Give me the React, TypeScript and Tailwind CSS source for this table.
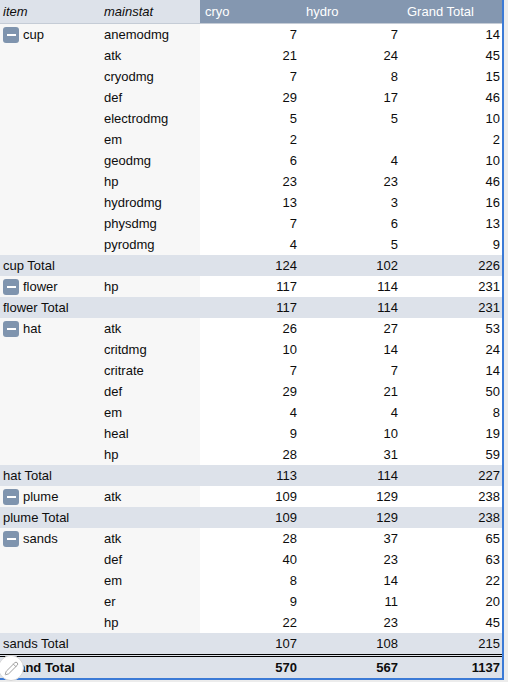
import { Pencil } from 'lucide-react';

type Row = [string, number | null, number | null, number];
type Group = { item: string; rows: Row[]; total: [number, number, number] };

const groups: Group[] = [
  {
    item: 'cup',
    rows: [
      ['anemodmg', 7, 7, 14],
      ['atk', 21, 24, 45],
      ['cryodmg', 7, 8, 15],
      ['def', 29, 17, 46],
      ['electrodmg', 5, 5, 10],
      ['em', 2, null, 2],
      ['geodmg', 6, 4, 10],
      ['hp', 23, 23, 46],
      ['hydrodmg', 13, 3, 16],
      ['physdmg', 7, 6, 13],
      ['pyrodmg', 4, 5, 9],
    ],
    total: [124, 102, 226],
  },
  { item: 'flower', rows: [['hp', 117, 114, 231]], total: [117, 114, 231] },
  {
    item: 'hat',
    rows: [
      ['atk', 26, 27, 53],
      ['critdmg', 10, 14, 24],
      ['critrate', 7, 7, 14],
      ['def', 29, 21, 50],
      ['em', 4, 4, 8],
      ['heal', 9, 10, 19],
      ['hp', 28, 31, 59],
    ],
    total: [113, 114, 227],
  },
  { item: 'plume', rows: [['atk', 109, 129, 238]], total: [109, 129, 238] },
  {
    item: 'sands',
    rows: [
      ['atk', 28, 37, 65],
      ['def', 40, 23, 63],
      ['em', 8, 14, 22],
      ['er', 9, 11, 20],
      ['hp', 22, 23, 45],
    ],
    total: [107, 108, 215],
  },
];

const cols = 'grid grid-cols-[100px_100px_100px_101px_101px]';

const Minus = () => (
  <span className="w-4 h-4 rounded-[3px] bg-[#7f94ae] flex items-center justify-center shrink-0">
    <span className="w-[9px] h-[2px] bg-white" />
  </span>
);

export default function App() {
  return (
    <div className="w-[508px] h-[682px] bg-[#ececec] overflow-hidden text-[13px] text-[#0d0d0d] font-['Liberation_Sans',Arial,sans-serif]">
      <div className="w-[504px] border-r-2 border-b-2 border-[#3b7ad6] bg-white relative">
        {/* header */}
        <div className={`${cols} h-[24px] border-b border-[#c5ccd6]`}>
          <div className="bg-[#dde2ea] italic pl-[3px] flex items-center">item</div>
          <div className="bg-[#dde2ea] italic pl-[4px] flex items-center">mainstat</div>
          <div className="bg-[#8497b0] text-white pl-[5px] flex items-center">cryo</div>
          <div className="bg-[#8497b0] text-white pl-[6px] flex items-center">hydro</div>
          <div className="bg-[#8497b0] text-white pl-[6px] flex items-center">Grand Total</div>
        </div>

        {groups.map((g) => (
          <div key={g.item}>
            {g.rows.map((r, i) => (
              <div key={g.item + r[0] + i} className={`${cols} h-[21px]`}>
                <div className="bg-[#f7f7f7] flex items-center gap-[4px] pl-[3px]">
                  {i === 0 && (
                    <>
                      <Minus />
                      <span>{g.item}</span>
                    </>
                  )}
                </div>
                <div className="bg-[#f7f7f7] pl-[4px] flex items-center">{r[0]}</div>
                <div className="flex items-center justify-end pr-[3px]">{r[1] ?? ''}</div>
                <div className="flex items-center justify-end pr-[3px]">{r[2] ?? ''}</div>
                <div className="flex items-center justify-end pr-[2px]">{r[3]}</div>
              </div>
            ))}
            <div className={`${cols} h-[21px] bg-[#dde2ea]`}>
              <div className="pl-[3px] flex items-center whitespace-nowrap">{g.item} Total</div>
              <div />
              <div className="flex items-center justify-end pr-[3px]">{g.total[0]}</div>
              <div className="flex items-center justify-end pr-[3px]">{g.total[1]}</div>
              <div className="flex items-center justify-end pr-[2px]">{g.total[2]}</div>
            </div>
          </div>
        ))}

        {/* grand total */}
        <div className={`${cols} h-[24px] bg-[#dde2ea] border-t-[3px] border-double border-black font-bold`}>
          <div className="pl-[3px] flex items-center whitespace-nowrap">Grand Total</div>
          <div />
          <div className="flex items-center justify-end pr-[3px]">570</div>
          <div className="flex items-center justify-end pr-[3px]">567</div>
          <div className="flex items-center justify-end pr-[2px]">1137</div>
        </div>

        {/* floating edit button */}
        <div className="absolute left-[-2px] top-[655px] w-[26px] h-[26px] rounded-full bg-white border border-[#d6d6d6] flex items-center justify-center">
          <Pencil className="w-[15px] h-[15px] text-[#9a9a9a] stroke-[1.5]" />
        </div>
      </div>
    </div>
  );
}
